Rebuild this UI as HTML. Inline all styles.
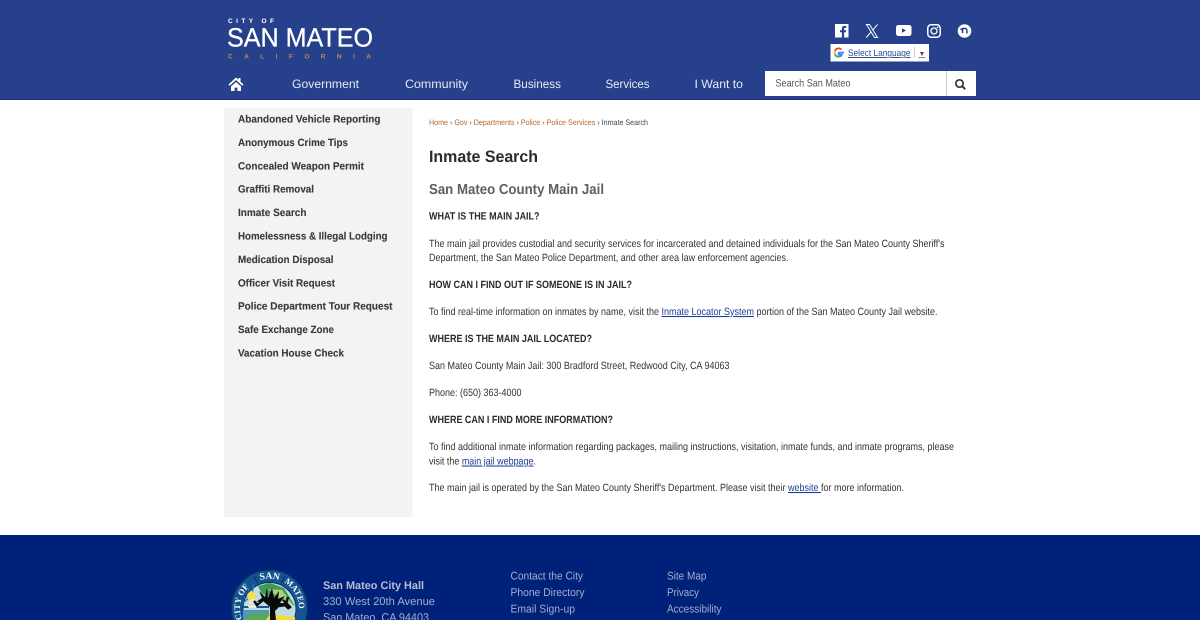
<!DOCTYPE html>
<html lang="en"><head><meta charset="utf-8"><title>Inmate Search</title>
<style>
html,body{margin:0;padding:0;background:#fff;width:1200px;height:620px;overflow:hidden}
svg{display:block;text-rendering:geometricPrecision;filter:blur(.25px)}
.b{font-family:"Liberation Sans",Arial,sans-serif;font-size:10.5px;fill:#333}
.h{font-family:"Liberation Sans",Arial,sans-serif;font-size:10.5px;font-weight:bold;fill:#2b2b2b}
.n{font-family:"Liberation Sans",sans-serif;font-size:12.2px;fill:#e4e9f4}
.s{font-family:"Liberation Sans",sans-serif;font-size:10.5px;font-weight:bold;fill:#3a3a3a;stroke:#3a3a3a;stroke-width:.12px}
.f{font-family:"Liberation Sans",sans-serif;font-size:11.2px;fill:#a3aecb}
.c{font-family:"Liberation Sans",Arial,sans-serif;font-size:8px;fill:#b8682e}
.l{fill:#1c3f94;text-decoration:underline}
</style></head><body>
<svg xmlns="http://www.w3.org/2000/svg" width="1200" height="620" viewBox="0 0 1200 620">
<rect width="1200" height="620" fill="#fff"/>
<rect width="1200" height="100" fill="#27408b"/>
<rect y="99" width="1200" height="1" fill="#1f3578"/>
<!-- logo -->
<text x="228" y="23" font-family="Liberation Sans" font-weight="bold" font-size="6.5" fill="#fff" textLength="46">CITY OF</text>
<text x="227" y="46.500" font-family="Liberation Sans" font-size="26.500" fill="#fff" stroke="#fff" stroke-width=".3" textLength="146" lengthAdjust="spacingAndGlyphs">SAN MATEO</text>
<text x="228" y="58.500" font-family="Liberation Sans" font-weight="bold" font-size="6.500" fill="#b98a4a" textLength="143">CALIFORNIA</text>
<!-- home -->
<path d="M236 77.500 228.500 84.500l1.200 1.200 6.300-5.700 6.300 5.700 1.200-1.200-3-2.800V78h-2v1.900z" fill="#fff"/>
<path d="M231 86.500 236 82l5 4.500V91h-3.600v-3.400h-2.800V91H231z" fill="#fff"/>
<!-- nav -->
<text class="n" x="292" y="88" textLength="67" lengthAdjust="spacingAndGlyphs">Government</text>
<text class="n" x="405" y="88" textLength="63" lengthAdjust="spacingAndGlyphs">Community</text>
<text class="n" x="513.500" y="88" textLength="47.500" lengthAdjust="spacingAndGlyphs">Business</text>
<text class="n" x="605.500" y="88" textLength="44" lengthAdjust="spacingAndGlyphs">Services</text>
<text class="n" x="694.500" y="88" textLength="48.500" lengthAdjust="spacingAndGlyphs">I Want to</text>
<!-- socials -->
<path fill-rule="evenodd" d="M835 24h13.500v13.500h-4.400v-5.200h1.800l.3-2.100h-2.100v-1.300c0-.7.3-1 1-1h1.200V26c-.4 0-1-.1-1.700-.1-1.800 0-2.700 1-2.700 2.800v1.500h-1.900v2.100h1.900v5.200H835z" fill="#fff"/>
<path d="M866.500 24.500h3l8 13h-3zM877.500 24.500l-4.900 5.700M871 32l-4.700 5.500" fill="none" stroke="#fff" stroke-width="1"/>
<path fill-rule="evenodd" d="M898.500 25h10.500c1.400 0 2.500 1.100 2.500 2.500v6c0 1.400-1.100 2.500-2.500 2.500h-10.500c-1.400 0-2.500-1.100-2.500-2.500v-6c0-1.400 1.100-2.500 2.500-2.500zM902 28.200v4.600l4-2.300z" fill="#fff"/>
<rect x="927.800" y="24.800" width="12.400" height="12.400" rx="3.200" fill="none" stroke="#fff" stroke-width="1.500"/>
<circle cx="934" cy="31" r="3" fill="none" stroke="#fff" stroke-width="1.300"/>
<circle cx="937.600" cy="27.400" r=".9" fill="#fff"/>
<circle cx="964.500" cy="31" r="6.800" fill="#fff"/>
<path d="M960.400 29.300c1.500 0 2.100-.4 2.100-1.300v5M962.500 30.800c0-1.700 1-2.500 2.200-2.500 1.200 0 2.200.9 2.200 2.500v2.700" fill="none" stroke="#27408b" stroke-width="1.500"/>
<!-- translate -->
<rect x="830.500" y="44" width="98.500" height="17.500" fill="#fff"/>
<path d="M844 52.600h-5.300v2h3.100c-.4 1.200-1.500 2-3.100 2" fill="none" stroke="#4285f4" stroke-width="1.800"/>
<path d="M838.700 56.800c-1.700 0-3.100-1-3.700-2.400" fill="none" stroke="#34a853" stroke-width="1.800"/>
<path d="M835 54.400c-.4-1.200-.4-2.400 0-3.600" fill="none" stroke="#fbbc05" stroke-width="1.800"/>
<path d="M835 50.800c.6-1.400 2-2.400 3.700-2.400 1.100 0 2 .4 2.700 1" fill="none" stroke="#ea4335" stroke-width="1.800"/>
<text x="848" y="56" font-family="Liberation Sans" font-size="9.500" fill="#2b4a94" text-decoration="underline" textLength="62.500" lengthAdjust="spacingAndGlyphs">Select Language</text>
<rect x="914" y="47" width="1" height="11" fill="#ccc"/>
<text x="918.500" y="56" font-family="Liberation Sans" font-size="7" fill="#555" text-decoration="underline">▼</text>
<!-- search -->
<rect x="765" y="71" width="211" height="25" fill="#fff"/>
<rect x="946" y="71" width="1" height="25" fill="#c6c8cc"/>
<text x="775.500" y="86.500" font-family="Liberation Sans" font-size="10.500" fill="#555" textLength="75" lengthAdjust="spacingAndGlyphs">Search San Mateo</text>
<circle cx="959.500" cy="83.500" r="3.700" fill="none" stroke="#333" stroke-width="1.700"/>
<path d="M962.200 86.200 965.200 89.200" stroke="#333" stroke-width="2"/>
<!-- sidebar -->
<rect x="224" y="108" width="188.500" height="409" fill="#f3f3f3"/>
<text class="s" x="238" y="122.500" textLength="142.500" lengthAdjust="spacingAndGlyphs">Abandoned Vehicle Reporting</text>
<text class="s" x="238" y="145.900" textLength="110" lengthAdjust="spacingAndGlyphs">Anonymous Crime Tips</text>
<text class="s" x="238" y="169.300" textLength="126" lengthAdjust="spacingAndGlyphs">Concealed Weapon Permit</text>
<text class="s" x="238" y="192.700" textLength="76" lengthAdjust="spacingAndGlyphs">Graffiti Removal</text>
<text class="s" x="238" y="216.200" textLength="68.500" lengthAdjust="spacingAndGlyphs">Inmate Search</text>
<text class="s" x="238" y="239.600" textLength="149.500" lengthAdjust="spacingAndGlyphs">Homelessness &amp; Illegal Lodging</text>
<text class="s" x="238" y="263" textLength="95.500" lengthAdjust="spacingAndGlyphs">Medication Disposal</text>
<text class="s" x="238" y="286.400" textLength="97" lengthAdjust="spacingAndGlyphs">Officer Visit Request</text>
<text class="s" x="238" y="309.700" textLength="154.500" lengthAdjust="spacingAndGlyphs">Police Department Tour Request</text>
<text class="s" x="238" y="333.100" textLength="96" lengthAdjust="spacingAndGlyphs">Safe Exchange Zone</text>
<text class="s" x="238" y="356.500" textLength="106" lengthAdjust="spacingAndGlyphs">Vacation House Check</text>
<!-- breadcrumb -->
<text class="c" x="429" y="125" textLength="219" lengthAdjust="spacingAndGlyphs"><tspan>Home</tspan><tspan fill="#555"> › </tspan><tspan>Gov</tspan><tspan fill="#555"> › </tspan><tspan>Departments</tspan><tspan fill="#555"> › </tspan><tspan>Police</tspan><tspan fill="#555"> › </tspan><tspan>Police Services</tspan><tspan fill="#444"> › Inmate Search</tspan></text>
<!-- titles -->
<text x="429" y="162" font-family="Liberation Sans" font-weight="bold" font-size="16.500" fill="#2b2b2b" textLength="109" lengthAdjust="spacingAndGlyphs">Inmate Search</text>
<text x="429" y="194" font-family="Liberation Sans" font-weight="bold" font-size="14.500" fill="#5f5f5f" textLength="175" lengthAdjust="spacingAndGlyphs">San Mateo County Main Jail</text>
<!-- body -->
<text class="h" x="429" y="219.700" textLength="110.500" lengthAdjust="spacingAndGlyphs">WHAT IS THE MAIN JAIL?</text>
<text class="b" x="429" y="247" textLength="515.500" lengthAdjust="spacingAndGlyphs">The main jail provides custodial and security services for incarcerated and detained individuals for the San Mateo County Sheriff's</text>
<text class="b" x="429" y="261" textLength="359.500" lengthAdjust="spacingAndGlyphs">Department, the San Mateo Police Department, and other area law enforcement agencies.</text>
<text class="h" x="429" y="288" textLength="203" lengthAdjust="spacingAndGlyphs">HOW CAN I FIND OUT IF SOMEONE IS IN JAIL?</text>
<text class="b" x="429" y="315" textLength="508.500" lengthAdjust="spacingAndGlyphs">To find real-time information on inmates by name, visit the <tspan class="l">Inmate Locator System</tspan> portion of the San Mateo County Jail website.</text>
<text class="h" x="429" y="342" textLength="163" lengthAdjust="spacingAndGlyphs">WHERE IS THE MAIN JAIL LOCATED?</text>
<text class="b" x="429" y="369" textLength="300.500" lengthAdjust="spacingAndGlyphs">San Mateo County Main Jail: 300 Bradford Street, Redwood City, CA 94063</text>
<text class="b" x="429" y="396" textLength="92.500" lengthAdjust="spacingAndGlyphs">Phone: (650) 363-4000</text>
<text class="h" x="429" y="423" textLength="184" lengthAdjust="spacingAndGlyphs">WHERE CAN I FIND MORE INFORMATION?</text>
<text class="b" x="429" y="450" textLength="525" lengthAdjust="spacingAndGlyphs">To find additional inmate information regarding packages, mailing instructions, visitation, inmate funds, and inmate programs, please</text>
<text class="b" x="429" y="464.500" textLength="107" lengthAdjust="spacingAndGlyphs">visit the <tspan class="l">main jail webpage</tspan>.</text>
<text class="b" x="429" y="491" textLength="475" lengthAdjust="spacingAndGlyphs">The main jail is operated by the San Mateo County Sheriff's Department. Please visit their <tspan class="l">website </tspan>for more information.</text>
<!-- footer -->
<rect y="535" width="1200" height="85" fill="#00217a"/>
<!-- seal -->
<circle cx="269.500" cy="608" r="38.500" fill="#14548f"/>
<circle cx="269.500" cy="608" r="38" fill="none" stroke="#0a2e5e" stroke-width="1"/>
<circle cx="269.500" cy="609" r="26.500" fill="#bcdde6" stroke="#0b2f60" stroke-width="1"/>
<path d="M258 586l12-3 14 5 11 18-13-6-12-4-8-2z" fill="#3f9a55"/>
<path d="M268 589l14 1 12 16-15-8z" fill="#a7d27f"/>
<path d="M244 598l8-3-4-7M252 595l-9 8M252 595l2-11" stroke="#2e78ad" stroke-width="1.200" fill="none"/>
<circle cx="251.500" cy="596" r="4.500" fill="#f4dc55"/>
<rect x="243" y="606" width="26" height="2" fill="#27508a"/>
<rect x="243" y="610" width="26" height="10" fill="#4a9bc2"/>
<path d="M252.500 604v-8l3.500 8zM251.500 604v-6l-3 6zM247 605h11l-2 3h-7z" fill="#f1ecd6"/>
<path d="M248 614q12-3 22 0v6h-26z" fill="#58a75a"/>
<path d="M266 620h29v-3l-25-3z" fill="#f2dc3b"/>
<path d="M270 620v-13l-7-6-7 1 6-4-3-7 6 6 2-9 1 10 4-10 2 10 5-7-1 8 7-3-5 7 7 0-7 3-5 5 1 9z" fill="#0a0a0a"/>
<path d="M263 600l-7 6M257 605l-3-4M283 600l8 8M286 604l2-7M279 606l7-1M285 605l4 4" stroke="#0a0a0a" stroke-width="2.400" fill="none"/>
<path d="M254 576l3.500 7M285 576l-3.500 7" stroke="#0a2e5e" stroke-width="1"/>
<path id="sa" d="M258 581A29.500 29.500 0 0 1 281 581" fill="none"/>
<text font-family="Liberation Serif" font-weight="bold" font-size="9.500" fill="#fff"><textPath href="#sa" startOffset="2.500">SAN</textPath></text>
<path id="sb" d="M242.500 620A29.500 29.500 0 0 1 254 583" fill="none"/>
<text font-family="Liberation Serif" font-weight="bold" font-size="8.500" fill="#fff"><textPath href="#sb" startOffset="1">CITY OF</textPath></text>
<path id="sc" d="M283.300 582A29.500 29.500 0 0 1 298.500 613" fill="none"/>
<text font-family="Liberation Serif" font-weight="bold" font-size="8.500" fill="#fff"><textPath href="#sc" startOffset="1">MATEO</textPath></text>
<!-- footer text -->
<text x="323" y="589" font-family="Liberation Sans" font-weight="bold" font-size="11" fill="#b7bfd6" textLength="101" lengthAdjust="spacingAndGlyphs">San Mateo City Hall</text>
<text class="f" x="323" y="605" textLength="112" lengthAdjust="spacingAndGlyphs">330 West 20th Avenue</text>
<text class="f" x="323" y="621" textLength="106" lengthAdjust="spacingAndGlyphs">San Mateo, CA 94403</text>
<text class="f" x="510.500" y="579.500" textLength="72.500" lengthAdjust="spacingAndGlyphs">Contact the City</text>
<text class="f" x="510.500" y="596" textLength="74" lengthAdjust="spacingAndGlyphs">Phone Directory</text>
<text class="f" x="510.500" y="612.500" textLength="64.500" lengthAdjust="spacingAndGlyphs">Email Sign-up</text>
<text class="f" x="667" y="579.500" textLength="39.500" lengthAdjust="spacingAndGlyphs">Site Map</text>
<text class="f" x="667" y="596" textLength="32" lengthAdjust="spacingAndGlyphs">Privacy</text>
<text class="f" x="667" y="612.500" textLength="54.500" lengthAdjust="spacingAndGlyphs">Accessibility</text>
</svg>
</body></html>
